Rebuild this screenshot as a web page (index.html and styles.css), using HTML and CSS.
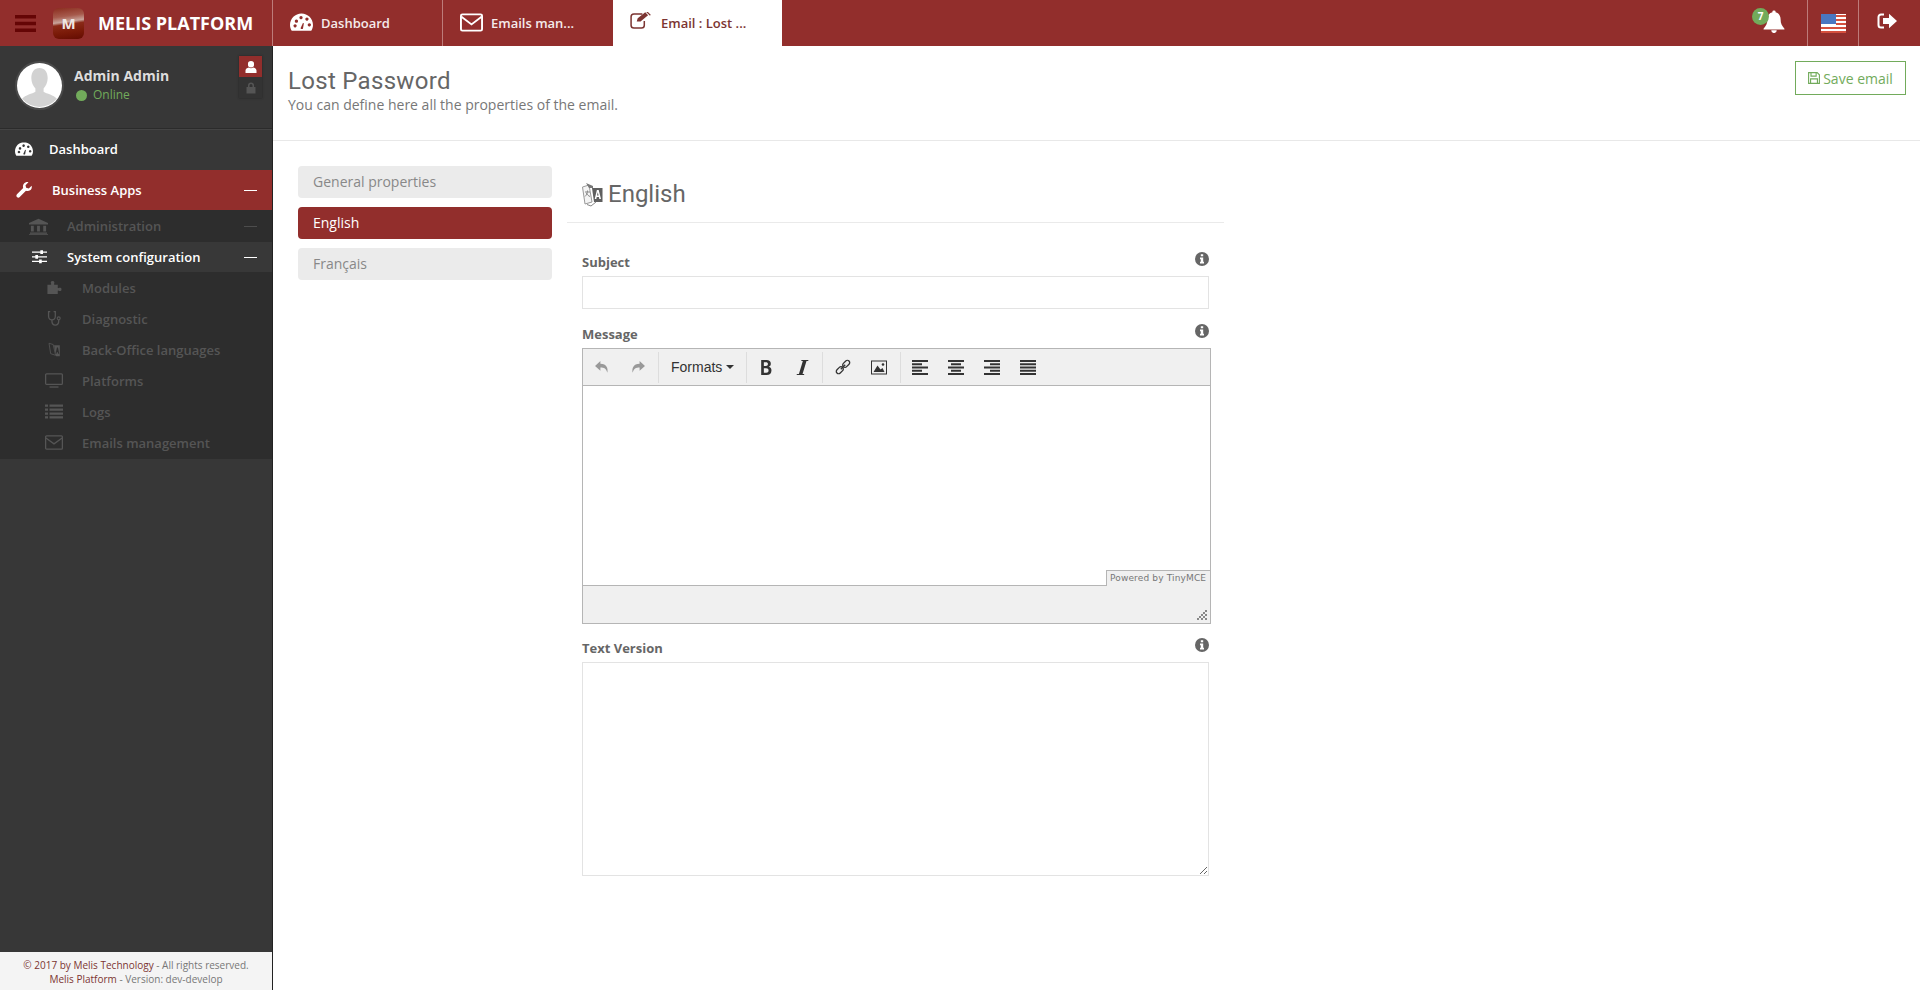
FILE: index.html
```html
<!DOCTYPE html>
<html lang="en">
<head>
    <meta charset="UTF-8">
    <title>Melis Platform</title>
    <link rel="stylesheet" href="styles.css">
</head>
<body>
    <header class="topbar">
        <div class="brand">
            <svg class="burger" viewBox="0 0 21 17"><path d="M0 0h21v3.400H0zM0 6.800h21v3.400H0zM0 13.600h21V17H0z"/></svg>
            <div class="logo">M</div>
            <span class="brand-name">MELIS PLATFORM</span>
        </div>
        <a class="tab">
            <svg class="tab-icon dash" viewBox="0 0 24 18"><path fill="#fff" fill-rule="evenodd" d="M12 0C5.400 0 0 5.300 0 12c0 2.300.7 4.300 1.800 6h20.400c1.100-1.700 1.800-3.700 1.800-6 0-6.700-5.400-12-12-12zM5 8.200a1.700 1.700 0 1 0 0-.01zM3.600 13a1.700 1.700 0 1 0 0-.01zM9.800 4.500a1.700 1.700 0 1 0 0-.01zM16 6a1.700 1.700 0 1 0 0-.01zM18.500 12a1.700 1.700 0 1 0 0-.01zM11 15.500a1.900 1.900 0 0 0 2.500.6l1-5.800-1-.2z"/></svg>
            <span>Dashboard</span>
        </a>
        <a class="tab">
            <svg class="tab-icon mail" viewBox="0 0 24 19"><rect x="1" y="1" width="22" height="17" rx="1.500" fill="none" stroke="#fff" stroke-width="2"/><path d="M1.500 3.500L12 11.500 22.500 3.500" fill="none" stroke="#fff" stroke-width="2"/></svg>
            <span>Emails man...</span>
        </a>
        <a class="tab tab-active">
            <svg class="tab-icon edit" viewBox="0 0 23 18"><path d="M15 9.500V14a3 3 0 0 1-3 3H4a3 3 0 0 1-3-3V5a3 3 0 0 1 3-3h9" fill="none" stroke="#7c3532" stroke-width="1.600"/><path fill="#7c3532" d="M7 10l1-3.500 8-6.200 3 3.200-8 6.500zM17 0l1.200-.6 3.600 3.400-.8 1.100z"/></svg>
            <span>Email : Lost ...</span>
        </a>
        <div class="top-right">
            <div class="top-cell bell-cell">
                <span class="bell-badge">7</span>
                <svg class="bell" viewBox="0 0 20 20"><path fill="#fff" d="M10 0a1.400 1.400 0 0 1 1.400 1.700C14.200 2.300 16 4.700 16 8c0 4 1.200 6 3.500 8.500v.7h-19v-.7C2.800 14 4 12 4 8c0-3.300 1.800-5.700 4.600-6.300A1.400 1.400 0 0 1 10 0zM7.500 18h5a2.500 2.500 0 0 1-5 0z"/></svg>
            </div>
            <div class="top-cell">
                <svg class="flag" viewBox="0 0 25 19"><rect width="25" height="19" fill="#fff"/><path fill="#d5503e" d="M15 1h10v2H15zM15 5h10v2H15zM15 9h10v2H15zM0 13h25v2H0zM0 17h25v2H0z"/><rect width="15" height="10" fill="#4a76c0"/></svg>
            </div>
            <div class="top-cell logout-cell">
                <svg class="logout" viewBox="0 0 20 16"><path fill="none" stroke="#fff" stroke-width="2" d="M7 1.500H4a2.500 2.500 0 0 0-2.500 2.500v8A2.500 2.500 0 0 0 4 14.500h3"/><path fill="#fff" d="M6 5h6V.8L20 8l-8 7.200V11H6z"/></svg>
            </div>
        </div>
    </header>

    <div class="main">
        <aside class="sidebar">
            <div class="profile">
                <div class="avatar">
                    <svg viewBox="0 0 44 44"><circle cx="22" cy="22" r="22" fill="#fff"/><path fill="#d2d2d2" d="M22 5c5 0 8 4 8 10 0 4-2 8-4 10v3c3 2 10 3 13 7a22 22 0 0 1-34 0c3-4 10-5 13-7v-3c-2-2-4-6-4-10 0-6 3-10 8-10z"/></svg>
                </div>
                <div class="profile-text">
                    <div class="profile-name">Admin Admin</div>
                    <div class="profile-status"><span class="dot"></span>Online</div>
                </div>
                <div class="profile-switch">
                    <span class="switch-on">
                        <svg viewBox="0 0 12 12"><path fill="#fff" d="M6 0a3 3 0 0 1 3 3.200A3 3 0 0 1 6 6.500a3 3 0 0 1-3-3.300A3 3 0 0 1 6 0zM.5 12V9.500C.5 8 2 6.800 3.800 6.500 4.500 7 5.200 7.300 6 7.300s1.500-.3 2.200-.8C10 6.800 11.500 8 11.500 9.500V12z"/></svg>
                    </span>
                    <span class="switch-off">
                        <svg viewBox="0 0 12 12"><path fill="#555" d="M1.500 5H3V3.500a3 3 0 0 1 6 0V5h1.500v6.500h-9zM4.500 5h3V3.500a1.500 1.500 0 0 0-3 0z"/></svg>
                    </span>
                </div>
            </div>

            <a class="nav-item nav-dash">
                <svg class="nav-icon" viewBox="0 0 24 18"><path fill="#fff" fill-rule="evenodd" d="M12 0C5.400 0 0 5.300 0 12c0 2.300.7 4.300 1.800 6h20.400c1.100-1.700 1.800-3.700 1.800-6 0-6.700-5.400-12-12-12zM5 8.200a1.700 1.700 0 1 0 0-.01zM3.600 13a1.700 1.700 0 1 0 0-.01zM9.800 4.500a1.700 1.700 0 1 0 0-.01zM16 6a1.700 1.700 0 1 0 0-.01zM18.500 12a1.700 1.700 0 1 0 0-.01zM11 15.500a1.900 1.900 0 0 0 2.500.6l1-5.800-1-.2z"/></svg>
                <span>Dashboard</span>
            </a>
            <a class="nav-item nav-business">
                <svg class="nav-icon wrench" viewBox="0 0 18 18"><path fill="#fff" d="M17.600 4.200c.5 2.200-.2 4-1.700 5.100-1.400 1-3 1.200-4.700.6l-7 7.100c-.9.800-2.200.8-3.100 0-.9-.9-.9-2.200 0-3.100l7-7.100c-.6-1.700-.3-3.400.7-4.700C10 .6 12-.2 14 .2l-3.300 3.400.7 3 3 .7z"/></svg>
                <span>Business Apps</span>
                <i class="dash-mark"></i>
            </a>
            <div class="subnav">
                <a class="sub-item sub-admin">
                    <svg class="sub-icon" viewBox="0 0 20 20" preserveAspectRatio="none"><path fill="#555" d="M10 1l10 5v1.500H0V6zM2 9h3v7H2zM8.500 9h3v7h-3zM15 9h3v7h-3zM1 17h18v1.500H1zM0 19h20v1H0z"/></svg>
                    <span>Administration</span>
                    <i class="dash-mark dim"></i>
                </a>
                <a class="sub-item sub-open">
                    <svg class="sub-icon sliders" viewBox="0 0 18 16"><path fill="#fff" d="M0 1.500h18v1.500H0zM0 7h18v1.500H0zM0 12.500h18V14H0z"/><path fill="#fff" d="M10 0h3.200v4.500H10zM4 5.500h3.200V10H4zM8.500 11h3.200v4.500H8.500z"/></svg>
                    <span>System configuration</span>
                    <i class="dash-mark"></i>
                </a>
                <div class="subsub">
                    <a class="leaf">
                        <svg class="leaf-icon" viewBox="0 0 18 16"><path fill="#555" d="M2 5h3.500c.5 0 .7-.4.4-.9C5.300 3 5.300 1 7.500 1s2.200 2 1.600 3.100c-.3.500-.1.900.4.900H13v3.200c0 .5.400.7.900.4 1.100-.6 3.100-.6 3.100 1.400s-2 2-3.100 1.400c-.5-.3-.9-.1-.9.400V15H2z"/></svg>
                        <span>Modules</span>
                    </a>
                    <a class="leaf">
                        <svg class="leaf-icon" viewBox="0 0 18 16"><path fill="none" stroke="#555" stroke-width="1.400" d="M5 .7H3.200v5C3.200 8 5 9.500 6.800 9.500s3.600-1.500 3.600-3.800v-5H8.600M6.800 9.500V11c0 2.500 1.800 4 3.600 4s3.600-1.500 3.600-4V9.500"/><circle cx="14" cy="7.800" r="1.600" fill="none" stroke="#555" stroke-width="1.200"/></svg>
                        <span>Diagnostic</span>
                    </a>
                    <a class="leaf">
                        <svg class="leaf-icon" viewBox="0 0 18 18"><path fill="none" stroke="#555" d="M3 1.500l5 1.500 3 13-6-2z"/><path fill="#555" d="M9 4h7v13H11.500z"/><path fill="#2d2d2d" d="M11 14l1.500-7.500h1.300l1.500 7.500H14l-.3-1.800h-1.300L12 14z"/></svg>
                        <span>Back-Office languages</span>
                    </a>
                    <a class="leaf">
                        <svg class="leaf-icon" viewBox="0 0 20 16"><rect x=".7" y=".7" width="18.600" height="11.600" rx="1" fill="none" stroke="#555" stroke-width="1.400"/><path fill="#555" d="M5 14.500h10V16H5z"/></svg>
                        <span>Platforms</span>
                    </a>
                    <a class="leaf">
                        <svg class="leaf-icon" viewBox="0 0 18 14"><path fill="#555" d="M0 0h3v2.300H0zM4.500 0H18v2.300H4.500zM0 4h3v2.300H0zM4.500 4H18v2.300H4.500zM0 8h3v2.300H0zM4.500 8H18v2.300H4.500zM0 11.700h3V14H0zM4.500 11.700H18V14H4.500z"/></svg>
                        <span>Logs</span>
                    </a>
                    <a class="leaf">
                        <svg class="leaf-icon" viewBox="0 0 20 16"><rect x=".7" y=".7" width="18.600" height="14.600" rx="1" fill="none" stroke="#555" stroke-width="1.400"/><path d="M1 3l9 6.500L19 3" fill="none" stroke="#555" stroke-width="1.400"/></svg>
                        <span>Emails management</span>
                    </a>
                </div>
            </div>
            <footer class="side-footer">
                <div><b>© 2017 by Melis Technology</b> - All rights reserved.</div>
                <div><b>Melis Platform</b> - Version: dev-develop</div>
            </footer>
        </aside>

        <main class="content">
            <div class="page-head">
                <div>
                    <h1>Lost Password</h1>
                    <p>You can define here all the properties of the email.</p>
                </div>
                <button class="save-btn">
                    <svg viewBox="0 0 14 14"><path fill="none" stroke="#72ab5b" stroke-width="1.300" d="M.7.7h10l2.600 2.600v10H.7z"/><path fill="none" stroke="#72ab5b" stroke-width="1.300" d="M3.500 1v3.800h6V1M3 13V8h8v5"/></svg>
                    Save email
                </button>
            </div>
            <div class="page-body">
                <nav class="side-tabs">
                    <a class="side-tab">General properties</a>
                    <a class="side-tab side-tab-on">English</a>
                    <a class="side-tab">Français</a>
                </nav>
                <section class="panel">
                    <h2>
                        <svg viewBox="0 0 21 25"><path fill="#f4f4f4" stroke="#999" d="M.5 5L7 3l3 17-7 2z"/><path fill="#777" d="M4 1l7 3v2H7z"/><path fill="#5f5f5f" d="M10 6h10.500v14H12z"/><path fill="#fff" d="M12.700 17l2.200-9h1.800l2.300 9h-1.700l-.4-2h-2.200l-.4 2zM15 13.500h1.600l-.8-3.300z"/><path fill="none" stroke="#888" d="M3 10h5M5.500 8.500c0 3-1.500 5-2.500 6M4.500 11c.5 1.500 2 3 3.500 3.500M5 22.500l4 1.500 5-4"/></svg>
                        English
                    </h2>
                    <div class="form">
                        <div class="field field-subject">
                            <label>Subject <svg class="info" viewBox="0 0 14 14"><circle cx="7" cy="7" r="7" fill="#666"/><path fill="#fff" d="M5.800 2.300h2.400v2H5.800zM5 5.500h3.200v4.300H9v1.800H5V9.800h.8V7.300H5z"/></svg></label>
                            <input type="text" class="text-input">
                        </div>
                        <div class="field field-message">
                            <label>Message <svg class="info" viewBox="0 0 14 14"><circle cx="7" cy="7" r="7" fill="#666"/><path fill="#fff" d="M5.800 2.300h2.400v2H5.800zM5 5.500h3.200v4.300H9v1.800H5V9.800h.8V7.300H5z"/></svg></label>
                            <div class="editor">
                                <div class="toolbar">
                                    <div class="tool-group">
                                        <svg class="tool dim" viewBox="0 0 14 14"><path d="M5.500 1L.5 5.500 5.500 10V7c3.500 0 5.500 1 6.500 5 .8-4-.5-8.500-6.500-8.500z"/></svg>
                                        <svg class="tool dim" viewBox="0 0 14 14"><path d="M8.500 1l5 4.500-5 4.500V7C5 7 3 8 2 12c-.8-4 .5-8.500 6.500-8.500z"/></svg>
                                    </div>
                                    <div class="tool-group group-formats">
                                        <span class="formats">Formats<i class="caret"></i></span>
                                    </div>
                                    <div class="tool-group">
                                        <svg class="tool" viewBox="0 0 14 14"><path fill-rule="evenodd" d="M2.500 0h5c2.500 0 4 1.200 4 3.400 0 1.400-.7 2.400-1.900 2.900v.1c1.600.4 2.500 1.600 2.500 3.300 0 2.700-1.800 4.300-4.500 4.300H2.500zM5 2.200v3.400h1.800c1.300 0 2-.6 2-1.800 0-1-.7-1.600-2-1.600zM5 7.700v4.100h2.200c1.400 0 2.200-.7 2.200-2.100 0-1.300-.8-2-2.300-2z"/></svg>
                                        <svg class="tool" viewBox="0 0 14 14"><path d="M6.500 0h6.500l-.2 1h-1.600L7.500 13h1.600l-.2 1H2l.2-1h1.900L7.800 1H6.300z"/></svg>
                                    </div>
                                    <div class="tool-group group-insert">
                                        <svg class="tool link-tool" viewBox="0 0 16 16"><g fill="none" stroke="#333" stroke-width="1.300"><rect x="-4" y="-2.300" width="8" height="4.600" rx="2.300" transform="translate(4.800 11.200) rotate(-45)"/><rect x="-4" y="-2.300" width="8" height="4.600" rx="2.300" transform="translate(11.200 4.800) rotate(-45)"/><path d="M5.800 10.200l4.400-4.400"/></g></svg>
                                        <svg class="tool" viewBox="0 0 16 14"><rect x=".5" y=".5" width="15" height="13" fill="none" stroke="#333"/><path d="M2.500 11.500L6.500 5l3 4 2-1.500 2 4z"/><circle cx="12" cy="4" r="1.300"/></svg>
                                    </div>
                                    <div class="tool-group last">
                                        <svg class="tool" viewBox="0 0 16 15"><path d="M0 0h16v2H0zM0 3.250h10v2H0zM0 6.500h16v2H0zM0 9.750h10v2H0zM0 13h16v2H0z"/></svg>
                                        <svg class="tool" viewBox="0 0 16 15"><path d="M0 0h16v2H0zM3 3.250h10v2H3zM0 6.500h16v2H0zM3 9.750h10v2H3zM0 13h16v2H0z"/></svg>
                                        <svg class="tool" viewBox="0 0 16 15"><path d="M0 0h16v2H0zM6 3.250h10v2H6zM0 6.500h16v2H0zM6 9.750h10v2H6zM0 13h16v2H0z"/></svg>
                                        <svg class="tool" viewBox="0 0 16 15"><path d="M0 0h16v2H0zM0 3.250h16v2H0zM0 6.500h16v2H0zM0 9.750h16v2H0zM0 13h16v2H0z"/></svg>
                                    </div>
                                </div>
                                <div class="edit-area">
                                    <span class="powered">Powered by TinyMCE</span>
                                </div>
                                <div class="statusbar">
                                    <svg class="grip" viewBox="0 0 10 10"><path fill="#888" d="M8 0h2v2H8zM6 2h2v2H6zM8 4h2v2H8zM4 4h2v2H4zM6 6h2v2H6zM2 6h2v2H2zM8 8h2v2H8zM4 8h2v2H4zM0 8h2v2H0z"/></svg>
                                </div>
                            </div>
                        </div>
                        <div class="field field-text">
                            <label>Text Version <svg class="info" viewBox="0 0 14 14"><circle cx="7" cy="7" r="7" fill="#666"/><path fill="#fff" d="M5.800 2.300h2.400v2H5.800zM5 5.500h3.200v4.300H9v1.800H5V9.800h.8V7.300H5z"/></svg></label>
                            <textarea class="text-area"></textarea>
                        </div>
                    </div>
                </section>
            </div>
        </main>
    </div>
</body>
</html>
```
FILE: styles.css
```css
* {
    box-sizing: border-box;
}

html, body {
    height: 100%;
}

body {
    margin: 0;
    font-family: "Open Sans", sans-serif;
    font-size: 14px;
    color: #666;
    background: #fff;
    display: flex;
    flex-direction: column;
    overflow: hidden;
}

/* top bar */
.topbar {
    height: 46px;
    flex: none;
    display: flex;
    background: #922e2c;
    color: #fff;
}

.brand {
    width: 273px;
    display: flex;
    align-items: center;
    padding-left: 15px;
    border-right: 1px solid #bd7c7a;
}

.burger {
    width: 21px;
    height: 17px;
    fill: #650505;
}

.logo {
    width: 31px;
    height: 31px;
    margin-left: 17px;
    border-radius: 6px;
    background: linear-gradient(172deg, #8a2c1e 0%, #a65a4c 28%, #c9a49b 44%, #8a2a18 52%, #7a1a08 75%, #640c02 100%);
    color: #efe6e3;
    font-weight: 700;
    font-size: 15px;
    line-height: 31px;
    text-align: center;
}

.brand-name {
    margin-left: 14px;
    font-size: 18px;
    font-weight: 700;
    white-space: nowrap;
}

.tab {
    width: 170px;
    display: flex;
    align-items: center;
    padding: 0 0 1px 17px;
    font-size: 13px;
    font-weight: 600;
    color: #f5eaea;
    border-right: 1px solid #bd7c7a;
}

.tab:nth-of-type(2) {
    border-right: 0;
}

.tab-active {
    width: 169px;
    background: #fff;
    color: #7c3532;
    border-right: 0;
}

.tab-icon {
    flex: none;
    margin-right: 8px;
}

.tab-icon.dash {
    width: 23px;
    height: 18px;
    margin-top: -1px;
}

.tab-icon.mail {
    width: 23px;
    height: 19px;
}

.tab-icon.edit {
    width: 22px;
    height: 17px;
    margin-top: -4px;
    margin-right: 9px;
}

.top-right {
    margin-left: auto;
    display: flex;
}

.top-cell {
    width: 51px;
    display: flex;
    align-items: center;
    justify-content: center;
    border-left: 1px solid #bd7c7a;
}

.bell-cell {
    width: 67px;
    border-left: 0;
    position: relative;
}

.logout-cell {
    width: 62px;
    padding-right: 6px;
}

.bell {
    width: 22px;
    height: 23px;
    margin-top: -3px;
}

.bell-badge {
    position: absolute;
    top: 8px;
    left: 12px;
    width: 17px;
    height: 17px;
    border-radius: 50%;
    background: #72ab5b;
    color: #fff;
    font-size: 10px;
    font-weight: 700;
    line-height: 17px;
    text-align: center;
    z-index: 1;
}

.flag {
    width: 25px;
    height: 19px;
}

.logout {
    width: 20px;
    height: 16px;
    margin-top: -4px;
}

/* sidebar */
.main {
    flex: 1;
    display: flex;
    min-height: 0;
}

.sidebar {
    width: 273px;
    flex: none;
    background: #373737;
    display: flex;
    flex-direction: column;
    border-right: 1px solid #222;
}

.profile {
    height: 83px;
    display: flex;
    align-items: flex-start;
    padding: 15px 0 0 15px;
    border-bottom: 1px solid #2b2b2b;
    box-shadow: 0 1px 0 #444;
}

.avatar {
    width: 49px;
    height: 49px;
    padding: 2px;
    border-radius: 50%;
    background: #4a4a4a;
    flex: none;
}

.avatar svg {
    display: block;
    width: 45px;
    height: 45px;
}

.profile-text {
    margin-left: 10px;
    padding-top: 5px;
}

.profile-name {
    color: #ddd;
    font-size: 14px;
    font-weight: 700;
    line-height: 20px;
}

.profile-status {
    display: flex;
    align-items: center;
    color: #72ab5b;
    font-size: 12px;
    line-height: 18px;
}

.dot {
    width: 11px;
    height: 11px;
    margin: 0 6px 0 2px;
    border-radius: 50%;
    background: #72ab5b;
}

.profile-switch {
    margin-left: auto;
    margin-right: 10px;
    margin-top: -5px;
    width: 23px;
    height: 42px;
    display: flex;
    flex-direction: column;
    box-shadow: 0 0 2px #222;
}

.profile-switch span {
    height: 21px;
    display: flex;
    align-items: center;
    justify-content: center;
}

.profile-switch svg {
    width: 12px;
    height: 12px;
}

.switch-on {
    background: #922e2c;
}

.switch-off {
    background: #333;
}

.nav-item {
    display: flex;
    align-items: center;
    color: #fff;
    font-size: 13px;
    font-weight: 600;
}

.nav-dash {
    height: 41px;
    padding: 0 0 1px 15px;
}

.nav-dash .nav-icon {
    width: 18px;
    height: 14px;
    margin-right: 16px;
}

.nav-business {
    height: 40px;
    padding: 0 15px 0 16px;
    background: #922e2c;
}

.wrench {
    width: 16px;
    height: 16px;
    margin-right: 20px;
}

.dash-mark {
    display: block;
    width: 13px;
    height: 1px;
    margin-left: auto;
    background: #fff;
}

.dash-mark.dim {
    background: #4d4d4d;
}

.subnav {
    background: #2d2d2d;
}

.sub-item {
    display: flex;
    align-items: center;
    padding: 0 15px 0 29px;
    font-size: 13px;
    font-weight: 600;
    color: #555;
}

.sub-admin {
    height: 32px;
}

.sub-open {
    height: 30px;
    color: #fff;
    background: #383838;
}

.sub-icon {
    width: 19px;
    height: 17px;
    margin-right: 19px;
}

.sub-icon.sliders {
    width: 15px;
    height: 14px;
    margin: 0 20px 0 3px;
}

.leaf {
    height: 31px;
    display: flex;
    align-items: center;
    padding-left: 45px;
    font-size: 13px;
    font-weight: 600;
    color: #555;
}

.subsub {
    height: 187px;
}

.leaf-icon {
    width: 18px;
    height: 15px;
    margin-right: 19px;
}

.side-footer {
    margin-top: auto;
    height: 38px;
    background: #f4f4f4;
    padding-top: 6px;
    text-align: center;
    color: #777;
    font-size: 10px;
    line-height: 14px;
}

.side-footer b {
    font-weight: 400;
    color: #7c3532;
}

/* content */
.content {
    flex: 1;
    min-width: 0;
}

.page-head {
    height: 95px;
    padding: 20px 14px 0 15px;
    display: flex;
    justify-content: space-between;
    align-items: flex-start;
    border-bottom: 1px solid #e8e8e8;
}

.page-head h1 {
    margin: 0;
    font-family: Roboto, sans-serif;
    font-weight: 400;
    font-size: 24px;
    line-height: 30px;
    letter-spacing: .3px;
    color: #666;
}

.page-head p {
    margin: -1px 0 0;
    font-size: 14px;
    line-height: 20px;
    color: #777;
}

.save-btn {
    width: 111px;
    height: 34px;
    margin-top: -5px;
    border: 1px solid #72ab5b;
    background: #fff;
    color: #72ab5b;
    font-family: "Open Sans", sans-serif;
    font-size: 14px;
    display: flex;
    align-items: center;
    justify-content: center;
    gap: 3px;
    padding: 0;
}

.save-btn svg {
    width: 12px;
    height: 12px;
}

.page-body {
    display: flex;
    padding: 25px 0 0 25px;
}

.side-tabs {
    width: 254px;
    display: flex;
    flex-direction: column;
    gap: 9px;
}

.side-tab {
    height: 32px;
    padding-left: 15px;
    border-radius: 4px;
    background: #ebebeb;
    color: #888;
    font-size: 14px;
    line-height: 31px;
}

.side-tab-on {
    background: #922e2c;
    color: #fff;
}

.panel {
    width: 657px;
    margin-left: 15px;
}

.panel h2 {
    height: 57px;
    margin: 0;
    padding-left: 15px;
    display: flex;
    align-items: center;
    gap: 5px;
    font-family: Roboto, sans-serif;
    font-weight: 400;
    font-size: 24px;
    color: #666;
    border-bottom: 1px solid #eaeaea;
}

.panel h2 svg {
    width: 21px;
    height: 25px;
}

.form {
    padding: 29px 0 0 15px;
}

.field label {
    display: flex;
    justify-content: space-between;
    align-items: flex-start;
    width: 627px;
    height: 24px;
    font-size: 13px;
    font-weight: 700;
    line-height: 20px;
    color: #666;
}

.info {
    width: 14px;
    height: 14px;
}

.text-input {
    display: block;
    width: 627px;
    height: 33px;
    border: 1px solid #e3e3e3;
    border-radius: 0;
    background: #fff;
}

.field-message {
    margin-top: 15px;
}

.editor {
    width: 629px;
    height: 276px;
    border: 1px solid #b5b5b5;
    display: flex;
    flex-direction: column;
}

.toolbar {
    height: 37px;
    flex: none;
    display: flex;
    align-items: center;
    background: #f0f0f0;
    border-bottom: 1px solid #b5b5b5;
}

.tool-group {
    height: 31px;
    display: flex;
    align-items: center;
    padding: 0 12px 0 11px;
    gap: 20px;
    border-right: 1px solid #ddd;
}

.group-formats {
    padding: 0 12px 0 12px;
}

.group-insert {
    padding: 0 13px 0 12px;
}

.tool-group.last {
    border-right: 0;
}

.tool {
    width: 16px;
    height: 15px;
    fill: #333;
}

.tool.link-tool {
    height: 16px;
}

.tool.dim {
    fill: #999;
}

.formats {
    font-family: "Liberation Sans", sans-serif;
    font-size: 14px;
    color: #333;
    display: flex;
    align-items: center;
}

.caret {
    margin-left: 4px;
    border-top: 4px solid #333;
    border-left: 4px solid transparent;
    border-right: 4px solid transparent;
}

.edit-area {
    height: 200px;
    flex: none;
    position: relative;
    background: #fff;
    border-bottom: 1px solid #b5b5b5;
}

.powered {
    position: absolute;
    right: 0;
    bottom: -1px;
    width: 104px;
    height: 16px;
    background: #f0f0f0;
    border: 1px solid #b5b5b5;
    border-right: 0;
    border-bottom: 0;
    padding-left: 3px;
    font-family: "DejaVu Sans", sans-serif;
    font-size: 9px;
    line-height: 15px;
    letter-spacing: .15px;
    white-space: nowrap;
    color: #777;
}

.statusbar {
    flex: 1;
    background: #f0f0f0;
    display: flex;
    justify-content: flex-end;
    align-items: flex-end;
    padding: 0 3px 3px 0;
}

.grip {
    width: 10px;
    height: 10px;
}

.field-text {
    margin-top: 14px;
}

.text-area {
    display: block;
    width: 627px;
    height: 214px;
    border: 1px solid #e3e3e3;
    border-radius: 0;
    background: #fff;
}
```
